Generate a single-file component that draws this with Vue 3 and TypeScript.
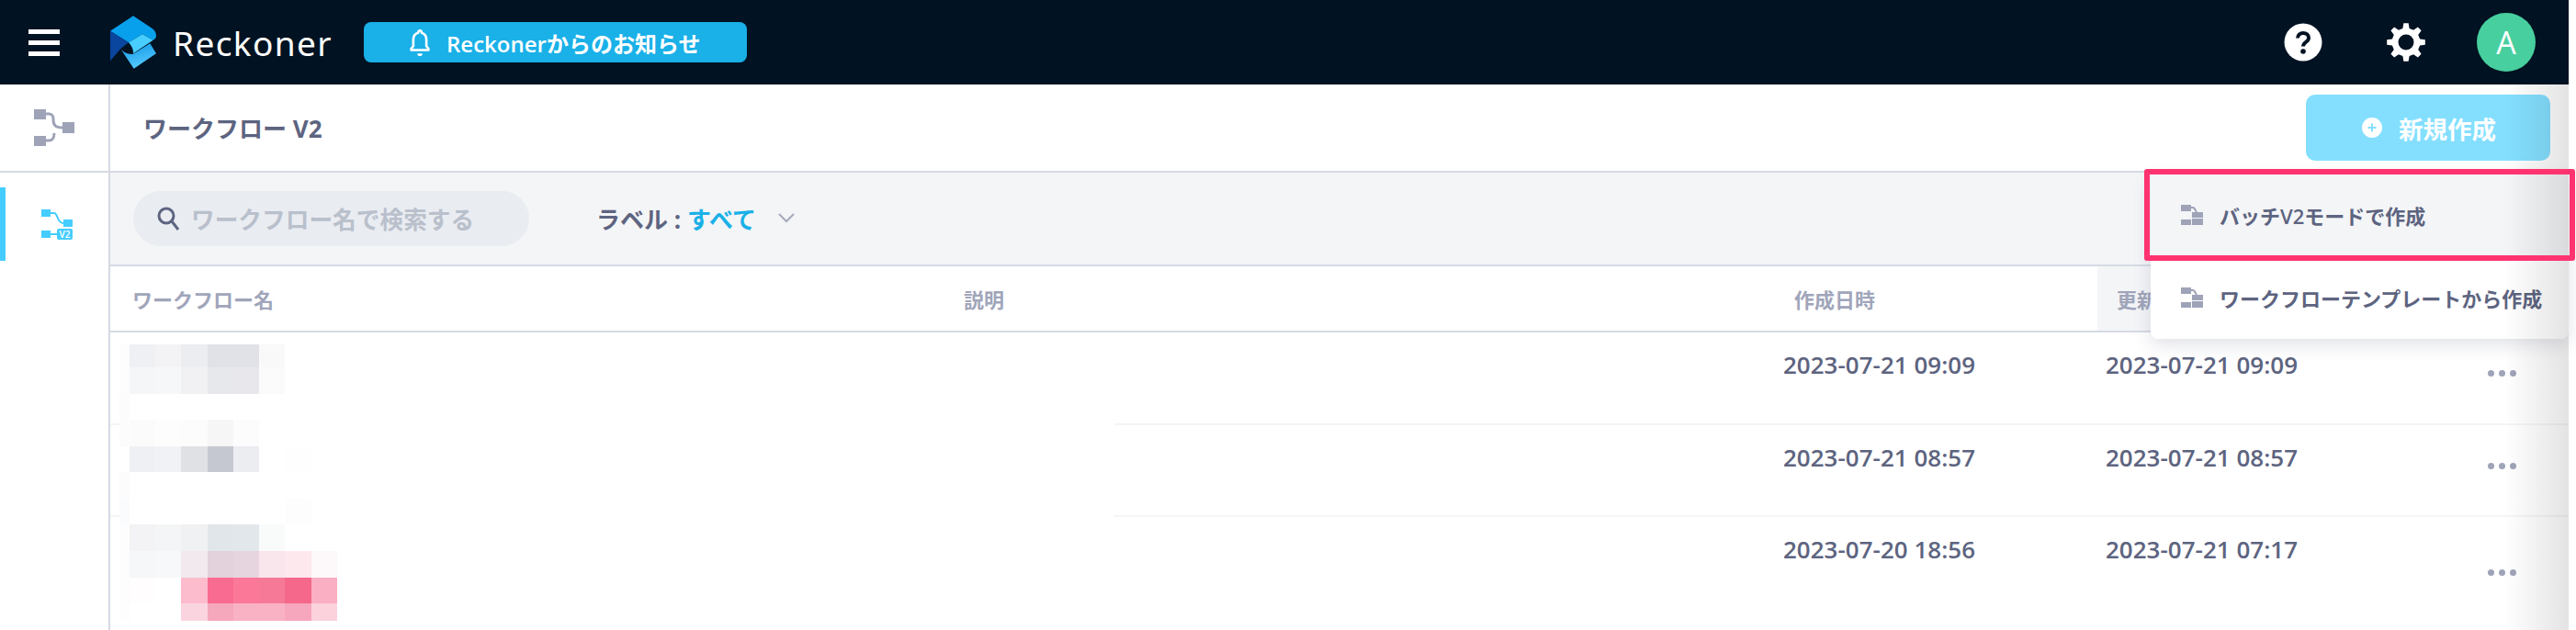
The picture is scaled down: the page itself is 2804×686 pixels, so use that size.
<script setup lang="ts">
const gearPath = (() => {
  const cx = 21, cy = 21, teeth = 8, ro = 21, ri = 15.5, hole = 8.5
  const pts: string[] = []
  for (let i = 0; i < teeth; i++) {
    const a = (i / teeth) * Math.PI * 2 - Math.PI / 2
    const s = (Math.PI * 2) / teeth
    const list: [number, number][] = [
      [ri, a - s * 0.3],
      [ro, a - s * 0.16],
      [ro, a + s * 0.16],
      [ri, a + s * 0.3],
    ]
    for (const [r, t] of list) {
      pts.push(`${(cx + r * Math.cos(t)).toFixed(2)} ${(cy + r * Math.sin(t)).toFixed(2)}`)
    }
  }
  return `M${pts.join('L')}Z M${cx - hole} ${cy}a${hole} ${hole} 0 1 0 ${hole * 2} 0a${hole} ${hole} 0 1 0 ${-hole * 2} 0Z`
})()

const rows = [
  { created: '2023-07-21 09:09', updated: '2023-07-21 09:09', tall: false },
  { created: '2023-07-21 08:57', updated: '2023-07-21 08:57', tall: false },
  { created: '2023-07-20 18:56', updated: '2023-07-21 07:17', tall: true },
]

const mosaic: string[][] = [
  ['#fdfdfd', '#eff0f4', '#f3f3f5', '#ecedf0', '#e1e2e7', '#e1e2e7', '#f9f9f9', '', ''],
  ['#fdfdfd', '#f5f6f8', '#f6f7f9', '#f1f1f3', '#e7e8eb', '#e8e8ec', '#fafbfa', '', ''],
  ['#fcfcfc', '', '', '', '', '', '', '', ''],
  ['#fcfcfc', '#fbfbfb', '#fdfdfd', '#fbfcfb', '#f6f6f6', '#fcfcfc', '', '', ''],
  ['', '#eff0f3', '#f1f2f5', '#e0e1e5', '#c6c8d1', '#ecedf1', '', '#fefefe', ''],
  ['#fcfcfd', '', '', '', '', '', '', '', ''],
  ['#fafbfc', '', '', '', '', '', '', '#fdfdfd', ''],
  ['#fdfdfd', '#f3f3f5', '#f4f5f6', '#f0f1f3', '#e1e6eb', '#e2e7ec', '#f9fafa', '', ''],
  ['#fdfdfd', '#f6f7f8', '#f7f8f9', '#f1e9ee', '#e3d1dc', '#e6d4de', '#f9e5ec', '#fde8ee', '#fdf8fa'],
  ['#fdfdfd', '#fffdfe', '', '#fdbccd', '#f96b90', '#fb7899', '#f67a97', '#f5678b', '#faafc2'],
  ['#fdfdfd', '', '', '#fad5e0', '#f5a7bc', '#f9b1c4', '#f9b1c4', '#f7a7bd', '#fcd2dd'],
]
const mosaicCells = mosaic.flat()
</script>

<template>
  <div class="page">
    <header class="topbar">
      <button class="burger" aria-label="menu"><i></i><i></i><i></i></button>
      <svg class="logo" viewBox="360 45 150 173" width="50" height="58">
        <defs>
          <linearGradient id="lg" x1="0.3" y1="0" x2="0.6" y2="1">
            <stop offset="0" stop-color="#159ae6" />
            <stop offset="1" stop-color="#58ccff" />
          </linearGradient>
        </defs>
        <path d="M360 95L435 45L495 85Q510 95 510 110Q510 120 500 125L465 105L420 132Z" fill="#08a0ec" />
        <path d="M360 95L420 132L395 152L360 192Z" fill="#0a459e" />
        <path d="M420 132L465 105L500 125L435 168Q437 150 420 132Z" fill="#48cdff" />
        <path d="M435 170L490 135L510 168L437 218L395 155Q410 172 435 170Z" fill="url(#lg)" />
      </svg>
      <span class="brand">Reckoner</span>
      <div class="notice">
        <svg class="bell" viewBox="0 0 24 32" width="24" height="32">
          <path d="M12 2.5a2 2 0 0 1 2 2v.6c3.6 1 5.6 4 5.6 7.9v7.5l2.4 3v1.5H2v-1.500l2.400-3V13c0-3.900 2-6.900 5.600-7.900v-.6a2 2 0 0 1 2-2z" fill="none" stroke="#fff" stroke-width="2.800" stroke-linejoin="round" />
          <path d="M9 29h6a3 3 0 0 1-6 0z" fill="#fff" />
        </svg>
        <span>Reckonerからのお知らせ</span>
      </div>
      <div class="top-right">
        <svg class="help" viewBox="0 0 42 42" width="42" height="42">
          <circle cx="21" cy="21" r="20.500" fill="#fff" />
          <path d="M15 16.500c0-3.500 2.700-5.500 6-5.500s6 2 6 5.200c0 4.600-6 4.500-6 9.300" fill="none" stroke="#011222" stroke-width="4" />
          <circle cx="21" cy="31" r="2.800" fill="#011222" />
        </svg>
        <svg class="gear" viewBox="0 0 42 42" width="42" height="42">
          <path :d="gearPath" fill="#fff" fill-rule="evenodd" />
        </svg>
        <div class="avatar">A</div>
      </div>
    </header>

    <div class="layout">
      <aside class="sidebar">
        <div class="side-top">
          <svg viewBox="0 0 44 40" width="44" height="40">
            <rect x="0" y="0" width="13" height="11" fill="#9ea3b8" />
            <rect x="31" y="14" width="13" height="12" fill="#9ea3b8" />
            <rect x="0" y="29" width="13" height="11" fill="#9ea3b8" />
            <path d="M13 5h3c4 0 5 2 5 6c0 6 2 9 10 9" fill="none" stroke="#9ea3b8" stroke-width="3" />
            <path d="M13 34h3c4 0 6-2 6-8" fill="none" stroke="#9ea3b8" stroke-width="3" />
          </svg>
        </div>
        <div class="side-item">
          <svg viewBox="0 0 34 33" width="34" height="33">
            <rect x="0" y="0" width="10" height="8" fill="#45cdff" />
            <rect x="24" y="11" width="10" height="8" fill="#45cdff" />
            <rect x="0" y="23" width="10" height="8" fill="#45cdff" />
            <rect x="17" y="21" width="17" height="12" rx="2" fill="#45cdff" />
            <path d="M10 4h4c4 0 3 11 10 11" fill="none" stroke="#45cdff" stroke-width="2" />
            <path d="M10 27h7" fill="none" stroke="#45cdff" stroke-width="2" />
            <text x="25.500" y="30.500" text-anchor="middle" class="v2">V2</text>
          </svg>
        </div>
      </aside>

      <main class="main">
        <div class="head">
          <h1 class="title">ワークフロー V2</h1>
          <button class="create">
            <svg viewBox="0 0 22 22" width="22" height="22">
              <circle cx="11" cy="11" r="11" fill="#fff" />
              <path d="M11 6.500v9M6.500 11h9" stroke="#84dfff" stroke-width="2" />
            </svg>
            <span>新規作成</span>
          </button>
        </div>

        <div class="filters">
          <div class="search">
            <svg viewBox="0 0 26 28" width="26" height="28">
              <circle cx="11" cy="11" r="8" fill="none" stroke="#5d6480" stroke-width="3" />
              <path d="M17 17l7 9" stroke="#5d6480" stroke-width="3" />
            </svg>
            <span>ワークフロー名で検索する</span>
          </div>
          <div class="label-filter">
            <span>ラベル : <b>すべて</b></span>
            <svg viewBox="0 0 18 11" width="18" height="11">
              <path d="M1 1l8 8l8-8" fill="none" stroke="#a5a9bc" stroke-width="2" />
            </svg>
          </div>
        </div>

        <div class="thead">
          <div class="th th-name">ワークフロー名</div>
          <div class="th th-desc">説明</div>
          <div class="th">作成日時</div>
          <div class="th th-active">更新日時</div>
        </div>

        <div class="tbody">
          <div v-for="(r, i) in rows" :key="r.created + r.updated" class="tr" :class="{ first: i === 0, last: r.tall }">
            <div></div>
            <div></div>
            <div class="td">{{ r.created }}</div>
            <div class="td">{{ r.updated }}</div>
            <div class="actions" :class="{ tall: r.tall }"><i></i><i></i><i></i></div>
          </div>
          <div class="mosaic" aria-hidden="true">
            <span v-for="(c, i) in mosaicCells" :key="i" :style="{ background: c || 'transparent' }"></span>
          </div>
        </div>
      </main>
    </div>

    <div class="menu">
      <div class="menu-item">
        <svg viewBox="0 0 24 22" width="24" height="22">
          <rect x="0" y="0" width="11" height="7" fill="#9ea3b8" />
          <rect x="12" y="8" width="12" height="6" fill="#9ea3b8" />
          <rect x="0" y="16" width="11" height="6" fill="#9ea3b8" />
          <rect x="12" y="15" width="12" height="7" fill="#9ea3b8" />
          <path d="M11 3h2c3 0 3 6 5 6" fill="none" stroke="#9ea3b8" stroke-width="2" />
        </svg>
        <span>バッチV2モードで作成</span>
      </div>
      <div class="menu-item">
        <svg viewBox="0 0 24 22" width="24" height="22">
          <rect x="0" y="0" width="11" height="7" fill="#9ea3b8" />
          <rect x="12" y="8" width="12" height="6" fill="#9ea3b8" />
          <rect x="0" y="16" width="11" height="6" fill="#9ea3b8" />
          <rect x="12" y="15" width="12" height="7" fill="#9ea3b8" />
          <path d="M11 3h2c3 0 3 6 5 6" fill="none" stroke="#9ea3b8" stroke-width="2" />
        </svg>
        <span>ワークフローテンプレートから作成</span>
      </div>
    </div>
    <div class="edge-shade"></div>
    <div class="highlight"></div>
  </div>
</template>

<style>
html, body { margin: 0; background: #fff; }
</style>

<style scoped>
.page {
  position: relative;
  width: 2804px;
  height: 686px;
  overflow: hidden;
  background: #fff;
  font-family: "Open Sans", "Noto Sans CJK JP", sans-serif;
  color: #5d6480;
}
.topbar {
  display: flex;
  align-items: center;
  width: 2796px;
  height: 92px;
  background: #011222;
  box-sizing: border-box;
  padding-left: 31px;
}
.burger {
  display: flex;
  flex-direction: column;
  gap: 7px;
  width: 34px;
  padding: 0;
  border: 0;
  background: none;
}
.burger i { display: block; height: 5px; background: #fff; }
.logo { margin-left: 55px; margin-top: -1px; flex: none; }
.brand {
  margin-left: 18px;
  color: #fff;
  font-size: 37px;
  letter-spacing: 1.4px;
  line-height: 1;
  font-family: "Noto Sans", sans-serif;
}
.notice {
  display: flex;
  align-items: center;
  box-sizing: border-box;
  width: 417px;
  height: 44px;
  margin-left: 34px;
  padding-left: 49px;
  border-radius: 8px;
  background: #1ab0e8;
  color: #fff;
  font-size: 24px;
  font-weight: 600;
  gap: 17px;
}
.bell { width: 24px; height: 30px; }
.top-right {
  display: flex;
  align-items: center;
  margin-left: auto;
  margin-right: 36px;
}
.gear { margin-left: 70px; }
.avatar {
  display: flex;
  align-items: center;
  justify-content: center;
  width: 64px;
  height: 64px;
  margin-left: 56px;
  border-radius: 50%;
  background: #48cf9f;
  color: #fff;
  font-size: 34px;
  font-weight: 500;
}
.layout { display: flex; width: 2796px; height: 594px; }
.sidebar {
  flex: none;
  box-sizing: border-box;
  width: 120px;
  border-right: 2px solid #d5dae3;
}
.side-top {
  display: flex;
  align-items: center;
  justify-content: center;
  box-sizing: content-box;
  height: 94px;
  border-bottom: 2px solid #d5dae3;
}
.side-item {
  display: flex;
  align-items: center;
  justify-content: center;
  box-sizing: border-box;
  height: 80px;
  margin-top: 16px;
  border-left: 6px solid #45cdff;
}
.v2 { font-size: 10px; font-weight: 600; fill: #fff; }
.main { flex: 1; min-width: 0; }
.head {
  display: flex;
  align-items: center;
  justify-content: space-between;
  box-sizing: content-box;
  height: 94px;
  padding: 0 20px 0 36px;
  border-bottom: 2px solid #d5dae3;
}
.title { margin: 0; font-size: 26px; font-weight: 700; color: #5d6480; }
.create {
  display: flex;
  align-items: center;
  justify-content: center;
  gap: 18px;
  width: 266px;
  height: 72px;
  padding: 0 0 0 2px;
  border: 0;
  border-radius: 10px;
  background: #84dfff;
  color: #fff;
  font: 700 26.500px "Open Sans", "Noto Sans CJK JP", sans-serif;
}
.filters {
  display: flex;
  align-items: center;
  box-sizing: border-box;
  height: 102px;
  padding-left: 25px;
  padding-bottom: 1px;
  background: #f4f5f7;
  border-bottom: 2px solid #d5dae3;
}
.search {
  display: flex;
  align-items: center;
  box-sizing: border-box;
  width: 431px;
  height: 60px;
  padding-left: 25px;
  gap: 12px;
  border-radius: 30px;
  background: #e9ecf1;
  color: #b9c0cc;
  font-size: 25.700px;
  font-weight: 600;
}
.label-filter {
  display: flex;
  align-items: center;
  gap: 24px;
  margin-left: 73px;
  font-size: 26px;
  font-weight: 700;
}
.label-filter b { color: #1ab0e8; font-weight: 600; }
.thead {
  display: grid;
  grid-template-columns: 910px 899px 354px 1fr;
  height: 72px;
  box-sizing: border-box;
  border-bottom: 2px solid #d5dae3;
}
.th {
  display: flex;
  align-items: center;
  padding-left: 24px;
  font-size: 22px;
  font-weight: 600;
  color: #a0a5ba;
}
.th-desc { padding-left: 19px; }
.th-active { background: #f4f5f7; padding-left: 21px; }
.tbody { position: relative; }
.tr {
  display: grid;
  grid-template-columns: 910px 899px 351px 357px 1fr;
  box-sizing: border-box;
  height: 100px;
  border-bottom: 2px solid #f4f5f7;
}
.tr.first { height: 101px; }
.tr.last { border-bottom: 0; height: 123px; }
.td {
  padding: 17px 0 0 12px;
  font-size: 26px;
  line-height: 36px;
  font-weight: 600;
}
.actions {
  display: flex;
  justify-content: flex-end;
  gap: 5px;
  padding: 41px 57px 0 0;
}
.actions.tall { padding-top: 57px; }
.actions i {
  width: 7px;
  height: 7px;
  border-radius: 50%;
  background: #9ea3b8;
  flex: none;
}
.mosaic {
  position: absolute;
  left: 10px;
  top: 13px;
  width: 1083px;
  height: 301px;
  background: #fff;
  display: grid;
  grid-template-columns: 11px 28px 28px 29px 28px 28px 28px 29px 28px;
  grid-template-rows: 25px 29px 28px 29px 28px 29px 28px 29px 29px 28px 19px;
}
.menu {
  position: absolute;
  left: 2341px;
  top: 190px;
  box-sizing: border-box;
  width: 455px;
  height: 179px;
  border-radius: 0 0 8px 8px;
  background: #fff;
  box-shadow: 0 6px 20px rgba(93, 100, 128, 0.2);
}
.menu-item {
  display: flex;
  align-items: center;
  gap: 18px;
  height: 91px;
  padding-left: 33px;
  font-size: 22px;
  font-weight: 600;
}
.menu-item:first-child { height: 88px; background: #f4f5f7; }
.edge-shade {
  position: absolute;
  right: 8px;
  top: 92px;
  bottom: 0;
  width: 70px;
  background: linear-gradient(90deg, rgba(0, 0, 0, 0), rgba(0, 0, 0, 0.11));
  pointer-events: none;
}
.highlight {
  position: absolute;
  left: 2334px;
  top: 184px;
  box-sizing: border-box;
  width: 469px;
  height: 100px;
  border: 6px solid #ff3370;
  border-radius: 3px;
}
</style>
